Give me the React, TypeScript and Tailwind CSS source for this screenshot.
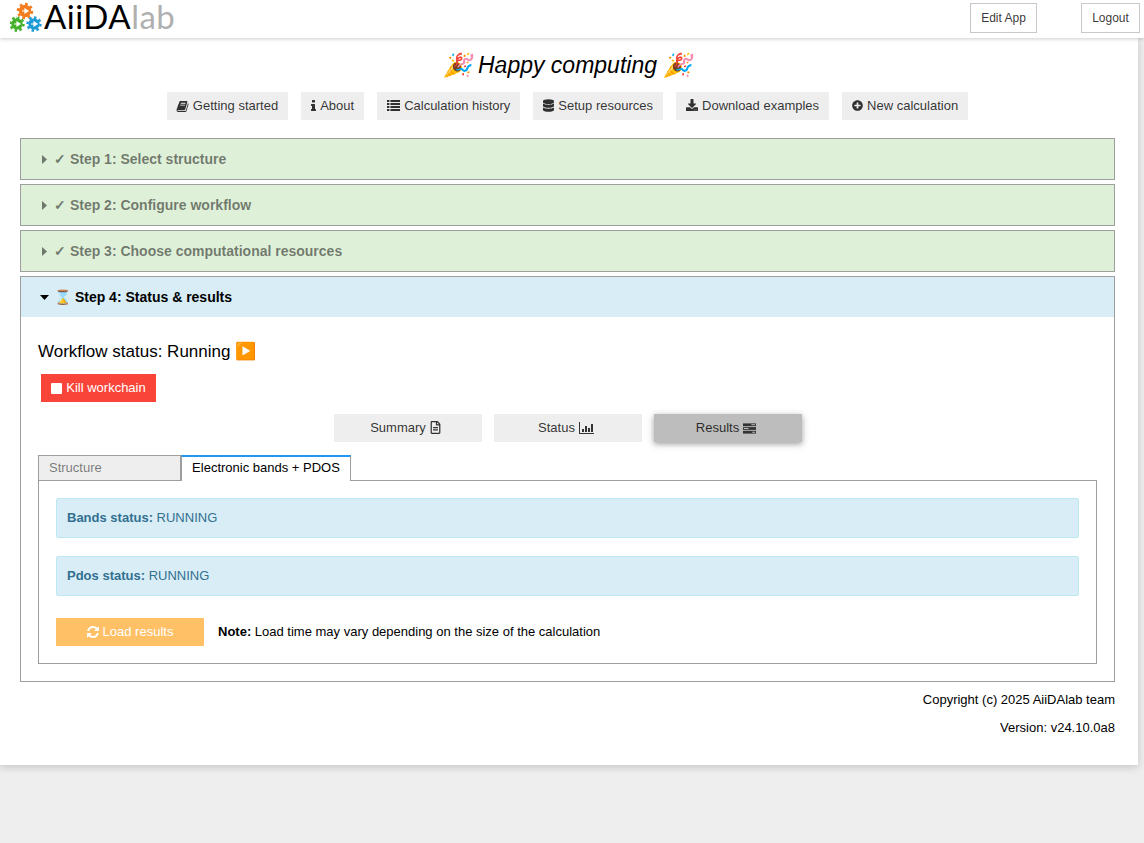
import React from "react";
import { FaDatabase, FaDownload, FaPlusCircle, FaRegFileAlt } from "react-icons/fa";

const Gear = ({ cx, cy, r, color }: { cx: number; cy: number; r: number; color: string }) => (
  <g>
    <circle cx={cx} cy={cy} r={r} fill="none" stroke={color} strokeWidth={2.4} pathLength={16} strokeDasharray="1 1" />
    <circle cx={cx} cy={cy} r={r - 0.8} fill={color} />
    <path d={`M${cx - 3} ${cy}h3.5M${cx} ${cy - 2}l3 2-3 2z`} fill="#fff" stroke="#fff" strokeWidth={1.2} />
  </g>
);

const Logo = () => (
  <div className="flex items-start ml-[10px] h-[38px]">
    <svg width="34" height="32" viewBox="0 0 34 32" className="shrink-0">
      <Gear cx={15} cy={11} r={7} color="#f57c1f" />
      <Gear cx={7} cy={24} r={6.5} color="#43b02a" />
      <Gear cx={24} cy={24} r={6.5} color="#1b9ad6" />
    </svg>
    <span className="text-[33px] leading-[33px] tracking-[0.5px] text-black font-['Lato','Liberation_Sans',sans-serif]">AiiDA</span>
    <span className="text-[33px] leading-[33px] tracking-[0.5px] text-[#b0b0b0] font-['Lato','Liberation_Sans',sans-serif]">lab</span>
  </div>
);

const BookIcon = () => (
  <svg width="12" height="13" viewBox="64 0 1664 1792" fill="currentColor" className="overflow-visible">
    <path d="M1639 478q40 57 18 129l-275 906q-19 64-76.5 107.5t-122.5 43.5h-923q-77 0-148.5-53.5t-99.5-131.5q-24-67-2-127 0-4 3-27t4-37q1-8-3-21.5t-3-19.5q2-11 8-21t16.5-23.5 16.5-23.5q23-38 45-91.5t30-91.5q3-10 .5-30t-.5-28q3-11 17-28t17-23q21-36 42-92t25-90q1-9-2.5-32t.5-28q4-13 22-30.5t22-22.5q19-26 42.5-84.5t27.5-96.5q1-8-3-25.5t-2-26.5q2-8 9-18t18-23 17-21q8-12 16.5-30.5t15-35 16-36 19.5-32 26.5-23.5 36-11.5 47.5 5.5l-1 3q38-9 51-9h761q74 0 114 56t18 130l-274 906q-36 119-71.5 153.5t-128.5 34.5h-869q-27 0-38 15-11 16-1 43 24 70 144 70h923q29 0 56-15.5t35-41.5l300-987q7-22 5-57 38 15 59 43zm-1064 2q-4 13 2 22.5t20 9.5h608q13 0 25.5-9.5t16.5-22.5l21-64q4-13-2-22.5t-20-9.5h-608q-13 0-25.5 9.5t-16.5 22.5zm-83 256q-4 13 2 22.5t20 9.5h608q13 0 25.5-9.5t16.5-22.5l21-64q4-13-2-22.5t-20-9.5h-608q-13 0-25.5 9.5t-16.5 22.5z" />
  </svg>
);

const InfoIcon = () => (
  <svg width="5" height="14" viewBox="576 0 640 1792" fill="currentColor" className="overflow-visible -mt-[1px]">
    <path d="M1216 1344v128q0 26-19 45t-45 19h-512q-26 0-45-19t-19-45v-128q0-26 19-45t45-19h64v-384h-64q-26 0-45-19t-19-45v-128q0-26 19-45t45-19h384q26 0 45 19t19 45v576h64q26 0 45 19t19 45zm-128-1152v192q0 26-19 45t-45 19h-256q-26 0-45-19t-19-45v-192q0-26 19-45t45-19h256q26 0 45 19t19 45z" />
  </svg>
);

const ListIcon = () => (
  <svg width="13" height="11" viewBox="0 0 13 11" fill="currentColor" className="-mt-[2px]">
    <path d="M0 0h2.4v2H0zM3.4 0H13v2H3.4zM0 3h2.4v2H0zM3.4 3H13v2H3.4zM0 6h2.4v2H0zM3.4 6H13v2H3.4zM0 9h2.4v2H0zM3.4 9H13v2H3.4z" />
  </svg>
);

const RefreshIcon = () => (
  <svg width="12" height="12" viewBox="128 128 1536 1536" fill="currentColor" className="overflow-visible">
    <path d="M1639 1056q0 5-1 7-64 268-268 434.5t-478 166.5q-146 0-282.5-55t-243.5-157l-129 129q-19 19-45 19t-45-19-19-45v-448q0-26 19-45t45-19h448q26 0 45 19t19 45-19 45l-137 137q71 66 161 102t187 36q134 0 250-65t186-179q11-17 53-117 8-23 30-23h192q13 0 22.5 9.5t9.5 22.5zm25-800v448q0 26-19 45t-45 19h-448q-26 0-45-19t-19-45 19-45l138-138q-148-137-349-137-134 0-250 65t-186 179q-11 17-53 117-8 23-30 23h-199q-13 0-22.5-9.5t-9.5-22.5v-7q65-268 270-434.5t480-166.5q146 0 284 55.5t245 156.5l130-129q19-19 45-19t45 19 19 45z" />
  </svg>
);

const NavBtn = ({ icon, label }: { icon: React.ReactNode; label: string }) => (
  <button className="h-7 px-[10px] bg-[#eeeeee] text-[13px] text-black/80 flex items-center gap-[4px] whitespace-nowrap">
    {icon}
    <span>{label}</span>
  </button>
);

const Step = ({ label }: { label: string }) => (
  <div className="h-[42px] border border-[#9e9e9e] bg-[#dff0d8] flex items-center pl-[21px] text-[14px] font-bold text-black/50">
    <svg width="5" height="9" viewBox="0 0 5 9" fill="currentColor" className="mr-[7px]">
      <path d="M0 0l5 4.5L0 9z" />
    </svg>
    <span>✓ {label}</span>
  </div>
);

const ToggleBtn = ({ label, icon, active, pad }: { label: string; icon: React.ReactNode; active?: boolean; pad: string }) => (
  <button className={`w-[148px] h-7 text-[13px] text-black/80 flex items-center justify-center gap-[4px] ${pad} ${active ? "bg-[#bdbdbd] shadow-[0_2px_5px_0_rgba(0,0,0,0.26),0_2px_10px_0_rgba(0,0,0,0.16)]" : "bg-[#eeeeee]"}`}>
    <span>{label}</span>
    {icon}
  </button>
);

const Alert = ({ name }: { name: string }) => (
  <div className="h-10 bg-[#d9edf7] border border-[#bce8f1] rounded-[2px] text-[13px] text-[#31708f] flex items-center px-[10px]">
    <span><b>{name} status:</b> RUNNING</span>
  </div>
);

const ChartIcon = () => (
  <svg width="15" height="12" viewBox="0 0 15 12" fill="#333">
    <path d="M0 0h1v11h14v1H0z" />
    <path d="M3 7h2v3H3zM6 4h2v6H6zM9 6h2v4H9zM12 2h2v8h-2z" />
  </svg>
);

const TasksIcon = () => (
  <svg width="13" height="11" viewBox="0 0 14 11" fill="#333">
    <path d="M0 0h14v3H0z" />
    <path d="M0 4h14v3H0z" />
    <path d="M0 8h14v3H0z" />
    <path d="M9 1h4v1H9zM1 5h5v1H1zM10 9h3v1h-3z" fill="#bdbdbd" />
  </svg>
);

export default function App() {
  return (
    <div className="h-[843px] w-full overflow-hidden bg-[#eeeeee] font-['Liberation_Sans',Arial,sans-serif] text-black">
      <header className="relative z-10 h-[38px] bg-white shadow-[0_1px_4px_rgba(0,0,0,0.2)] flex items-start justify-between pr-[4px]">
        <Logo />
        <div className="flex gap-[44px] pt-[3px]">
          <button className="h-[30px] w-[67px] border border-[#c8c8c8] bg-white text-[12px] text-black/80">Edit App</button>
          <button className="h-[30px] w-[59px] border border-[#c8c8c8] bg-white text-[12px] text-black/80">Logout</button>
        </div>
      </header>

      <main className="w-[1138px] h-[727px] bg-white shadow-[0_2px_8px_rgba(0,0,0,0.18)] px-[20px] pr-[23px] pt-[9px]">
        <h1 className="h-[36px] flex items-center justify-center text-[23px] italic font-normal whitespace-pre">🎉 Happy computing 🎉</h1>

        <nav className="mt-[9px] flex justify-center gap-[13px]">
          <NavBtn icon={<BookIcon />} label="Getting started" />
          <NavBtn icon={<InfoIcon />} label="About" />
          <NavBtn icon={<ListIcon />} label="Calculation history" />
          <NavBtn icon={<FaDatabase className="w-[11px] h-[13px] -mt-[1px]" />} label="Setup resources" />
          <NavBtn icon={<FaDownload className="w-[12px] h-[12px] -mt-[2px]" />} label="Download examples" />
          <NavBtn icon={<FaPlusCircle className="w-[11px] h-[11px] -mt-[1px]" />} label="New calculation" />
        </nav>

        <section className="mt-[18px] flex flex-col gap-[4px]">
          <Step label="Step 1: Select structure" />
          <Step label="Step 2: Configure workflow" />
          <Step label="Step 3: Choose computational resources" />

          <div className="h-[406px] border border-[#9e9e9e]">
            <div className="h-10 bg-[#d9edf7] flex items-center pl-[19px] text-[14px] font-bold">
              <svg width="9" height="5" viewBox="0 0 9 5" fill="currentColor" className="mr-[5px]">
                <path d="M0 0h9L4.5 5z" />
              </svg>
              <span>⌛ Step 4: Status & results</span>
            </div>

            <div className="px-[17px] pt-[24px]">
              <div className="h-[22px] flex items-center text-[17px]">Workflow status: Running ▶️</div>

              <button className="mt-[11px] ml-[3px] w-[115px] h-7 bg-[#f9443a] text-white text-[13px] flex items-center justify-center gap-[4px]">
                <span className="w-[11px] h-[11px] bg-white rounded-[1px]" />
                <span>Kill workchain</span>
              </button>

              <div className="mt-[12px] flex justify-center gap-[12px] pl-[1px]">
                <ToggleBtn pad="pr-[5px]" label="Summary" icon={<FaRegFileAlt className="w-[11px] h-[13px] -mt-[1px]" />} />
                <ToggleBtn pad="pr-[4px]" label="Status" icon={<ChartIcon />} />
                <ToggleBtn pad="pr-[4px]" label="Results" icon={<TasksIcon />} active />
              </div>

              <div className="mt-[13px] flex h-[26px] text-[13px]">
                <div className="w-[143px] h-[26px] bg-[#eeeeee] border border-[#9e9e9e] text-black/50 flex items-center pl-[10px]">Structure</div>
                <div className="relative z-[1] w-[170px] h-[26px] bg-white border-x border-[#9e9e9e] border-t-2 border-t-[#2196f3] text-black flex items-center justify-center pb-[2px]">Electronic bands + PDOS</div>
              </div>

              <div className="-mt-[1px] h-[184px] border border-[#9e9e9e] p-[17px]">
                <div className="flex flex-col gap-[18px]">
                  <Alert name="Bands" />
                  <Alert name="Pdos" />
                </div>
                <div className="mt-[22px] flex items-center">
                  <button className="w-[148px] h-7 bg-[#ffc066] text-white text-[13px] flex items-center justify-center gap-[4px]">
                    <RefreshIcon />
                    <span>Load results</span>
                  </button>
                  <p className="ml-[14px] text-[13px]"><b>Note:</b> Load time may vary depending on the size of the calculation</p>
                </div>
              </div>
            </div>
          </div>
        </section>

        <footer className="mt-[9px] flex flex-col items-end gap-[10px] text-[13px] leading-[18px]">
          <p>Copyright (c) 2025 AiiDAlab team</p>
          <p>Version: v24.10.0a8</p>
        </footer>
      </main>
    </div>
  );
}
